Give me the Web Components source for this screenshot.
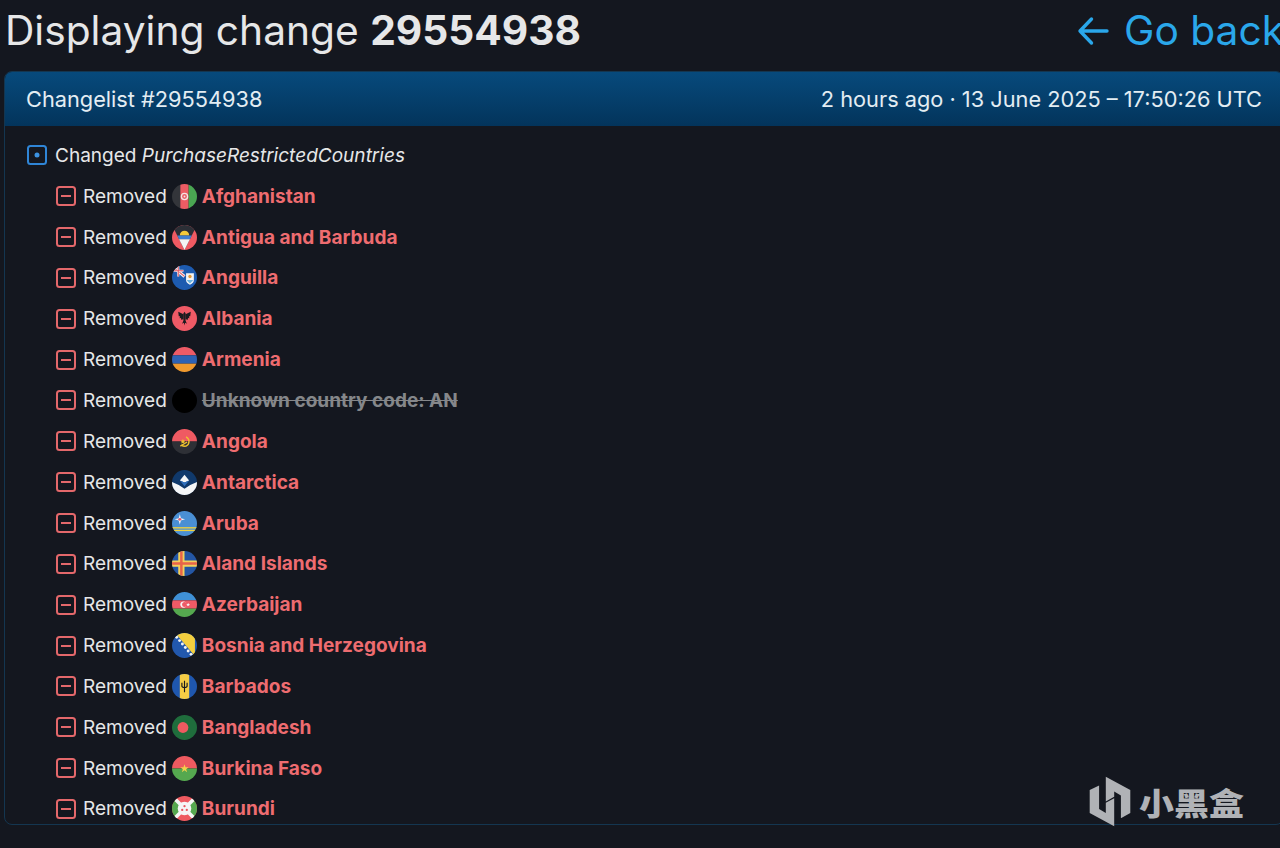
<!DOCTYPE html>
<html lang="en"><head><meta charset="utf-8"><title>Change 29554938</title>
<style>
html,body{margin:0;height:848px;overflow:hidden;background:#14171f}
body{font-family:Inter,"Noto Sans CJK SC",sans-serif}
</style></head><body>
<app-page>
  <page-title slot="title" number="29554938"></page-title>
  <change-card id="card" title-text="Changelist #29554938" time-text="2 hours ago · 13 June 2025 – 17:50:26 UTC">
    <change-row kind="changed"><span>Changed <i>PurchaseRestrictedCountries</i></span></change-row>
    <change-row kind="removed" flag="af">Afghanistan</change-row>
    <change-row kind="removed" flag="ag">Antigua and Barbuda</change-row>
    <change-row kind="removed" flag="ai">Anguilla</change-row>
    <change-row kind="removed" flag="al">Albania</change-row>
    <change-row kind="removed" flag="am">Armenia</change-row>
    <change-row kind="removed" flag="an" unknown>Unknown country code: AN</change-row>
    <change-row kind="removed" flag="ao">Angola</change-row>
    <change-row kind="removed" flag="aq">Antarctica</change-row>
    <change-row kind="removed" flag="aw">Aruba</change-row>
    <change-row kind="removed" flag="ax">Aland Islands</change-row>
    <change-row kind="removed" flag="az">Azerbaijan</change-row>
    <change-row kind="removed" flag="ba">Bosnia and Herzegovina</change-row>
    <change-row kind="removed" flag="bb">Barbados</change-row>
    <change-row kind="removed" flag="bd">Bangladesh</change-row>
    <change-row kind="removed" flag="bf">Burkina Faso</change-row>
    <change-row kind="removed" flag="bi">Burundi</change-row>
  </change-card>
  <water-mark></water-mark>
</app-page>
<script>
const FLAGS={
af:`<rect width="8.5" height="24" fill="#33353a"/><rect x="8" width="8" height="24" fill="#ec5c64"/><rect x="16" width="8" height="24" fill="#4aa652"/><circle cx="12" cy="12" r="3" fill="none" stroke="#f4e4e4" stroke-width="1.3"/><circle cx="12" cy="12" r=".9" fill="#f4e4e4"/>`,
ag:`<rect width="24" height="24" fill="#ef5a62"/><path d="M0 0H24L12 24Z" fill="#2c2f36"/><path d="M7.500 10a4.500 4.500 0 0 1 9 0Z" fill="#f3c93a"/><path d="M5 10H19L17.200 13.600H6.800Z" fill="#3f7fd0"/><path d="M6.800 13.600H17.200L12 24Z" fill="#f4f4f4"/>`,
ai:`<rect width="24" height="24" fill="#1d5bb0"/><path d="M0 1L12 11" stroke="#f3f3f3" stroke-width="3"/><path d="M0 1L12 11" stroke="#e45660" stroke-width="1"/><path d="M0 5.500H11M6 0V11" stroke="#f3f3f3" stroke-width="2"/><path d="M0 5.500H11M6 0V11" stroke="#e45660" stroke-width="1"/><path d="M13.500 8H21V14.500Q21 17.500 17.250 19Q13.500 17.500 13.500 14.500Z" fill="#f4f4f4"/><path d="M14.500 14.500H20V15L17.250 17.800L14.500 15Z" fill="#6fb5e0"/><circle cx="17.250" cy="11" r="1.600" fill="#e49a3a"/>`,
al:`<rect width="24" height="24" fill="#ef5a66"/><g fill="#1b1b1f"><path d="M11 8L6 5.500L6.500 9.800L7.700 9.800L7.300 11.700L8.700 11.500L8.700 13.200L11 12.700Z"/><path d="M13 8L18 5.500L17.500 9.800L16.300 9.800L16.700 11.700L15.300 11.500L15.300 13.200L13 12.700Z"/><path d="M12 5.500L13.200 7.500L13 14L14.300 17L12.600 16L12 18.800L11.400 16L9.700 17L11 14L10.800 7.500Z"/></g>`,
am:`<rect width="24" height="8" fill="#ee5b66"/><rect y="8" width="24" height="8" fill="#2e62b4"/><rect y="16" width="24" height="8" fill="#f09a2e"/>`,
an:`<rect width="24" height="24" fill="#000"/>`,
ao:`<rect width="24" height="12" fill="#ef5a62"/><rect y="12" width="24" height="12" fill="#2e3036"/><path d="M13.500 7.500A5 5 0 0 1 13.500 16.500A6 6 0 0 1 9 15.500" fill="none" stroke="#eec12f" stroke-width="1.300"/><path d="M8 16.500L14.500 12.500" stroke="#eec12f" stroke-width="1.300"/><path d="M10.500 9.500L11.300 11L13 11.200L11.700 12.300L12 14L10.500 13.200L9 14L9.300 12.300L8 11.200L9.700 11Z" fill="#eec12f"/>`,
aq:`<rect width="24" height="24" fill="#10396b"/><path d="M0 11.500L6.500 14.500L12 18L17.500 14.500L24 11.500V24H0Z" fill="#f5f6f7"/><path d="M12 4.500L16.500 10L12 12L7.500 10Z" fill="#f5f6f7"/><path d="M7.500 10L12 12L16.500 10L12 15.500Z" fill="#2f6fbd"/>`,
aw:`<rect width="24" height="24" fill="#4a8fd4"/><rect y="15.500" width="24" height="1.300" fill="#f2d23c"/><rect y="18" width="24" height="1.300" fill="#f2d23c"/><path d="M7.500 3L8.600 6.900L12.500 8L8.600 9.100L7.500 13L6.400 9.100L2.500 8L6.400 6.900Z" fill="#f3f3f6"/><circle cx="7.500" cy="8" r="1.400" fill="#d9566c"/>`,
ax:`<rect width="24" height="24" fill="#2456a4"/><path d="M9 0V24M0 12H24" stroke="#f2cf5a" stroke-width="6"/><path d="M9 0V24M0 12H24" stroke="#e8634a" stroke-width="2.400"/>`,
az:`<rect width="24" height="8" fill="#3f90d6"/><rect y="8" width="24" height="8" fill="#ee5a66"/><rect y="16" width="24" height="8" fill="#55a84f"/><circle cx="11" cy="12" r="3" fill="#f6f2f2"/><circle cx="12.100" cy="12" r="2.400" fill="#ee5a66"/><path d="M15.500 10.300l.5 1.200 1.300.1-1 .8.300 1.300-1.100-.7-1.100.7.300-1.300-1-.8 1.300-.1z" fill="#f6f2f2"/>`,
ba:`<rect width="24" height="24" fill="#2258ad"/><path d="M3 0H22V22Z" fill="#f4cf3f"/><g fill="#f4f4f4"><circle cx="4.500" cy="4" r="1.400"/><circle cx="7.300" cy="7.300" r="1.400"/><circle cx="10" cy="10.600" r="1.400"/><circle cx="12.800" cy="13.900" r="1.400"/><circle cx="15.500" cy="17.200" r="1.400"/><circle cx="18.300" cy="20.500" r="1.400"/></g>`,
bb:`<rect width="24" height="24" fill="#1f57ae"/><rect x="7.500" width="9" height="24" fill="#f6cd45"/><path d="M12 6.500V17.500M9.500 8.500V11.500Q9.500 13 12 13Q14.500 13 14.500 11.500V8.500" fill="none" stroke="#1a1a1e" stroke-width="1.100"/>`,
bd:`<rect width="24" height="24" fill="#1f6d3c"/><circle cx="10.500" cy="12" r="5.200" fill="#ee5a60"/>`,
bf:`<rect width="24" height="12" fill="#ee5a60"/><rect y="12" width="24" height="12" fill="#55a84f"/><path d="M12 8L13 10.800H16L13.600 12.600L14.500 15.500L12 13.700L9.500 15.500L10.400 12.600L8 10.800H11Z" fill="#f4d24a"/>`,
bi:`<rect width="24" height="24" fill="#ee5a60"/><path d="M0 0L12 12L0 24ZM24 0L12 12L24 24Z" fill="#55a84f"/><path d="M0 0L24 24M24 0L0 24" stroke="#f5f5f5" stroke-width="3.400"/><circle cx="12" cy="12" r="6.500" fill="#f5f5f5"/><g fill="#e8555c"><circle cx="12" cy="9.800" r="1.100"/><circle cx="9.800" cy="13.400" r="1.100"/><circle cx="14.200" cy="13.400" r="1.100"/></g>`
};
function define(name,html){
  customElements.define(name,class extends HTMLElement{
    constructor(){super();this.attachShadow({mode:'open'})}
    connectedCallback(){this.shadowRoot.innerHTML=typeof html==='function'?html(this):html}
  });
}
define('app-page',`<style>
:host{display:block;width:1280px;height:848px;overflow:hidden;position:relative;color:#e8e9ea;
 font-family:Inter,"Noto Sans CJK SC",sans-serif}
.w{width:1280px;padding:0 0 0 4px;box-sizing:border-box}
</style><div class="w"><slot name="title"></slot><slot></slot></div>`);
define('page-title',h=>`<style>
:host{display:flex;justify-content:space-between;align-items:center;width:1280px;height:71px;padding-bottom:10px;box-sizing:border-box}
h1{margin:0 0 0 1px;font-size:40.700px;font-weight:400;color:#e6e7e8;line-height:60px;white-space:nowrap}
b{font-weight:700}
a{display:flex;align-items:center;gap:15px;color:#2aa7ea;font-size:40.700px;line-height:60px;text-decoration:none;white-space:nowrap}
svg{display:block}
</style><h1>Displaying change <b>${h.getAttribute('number')}</b></h1>
<a href="#"><svg width="32" height="30" viewBox="0 0 32 30" fill="none" stroke="#2aa7ea" stroke-width="3.400" stroke-linecap="round" stroke-linejoin="round"><path d="M3 15H30M14.500 3L3 15L14.500 27"/></svg><span>Go back</span></a>`);
define('change-card',h=>`<style>
:host{display:block;width:1280px;border:1px solid #143650;border-radius:8px;box-sizing:border-box;overflow:hidden;background:#14171f}
header{display:flex;justify-content:space-between;align-items:center;height:54px;padding:0 21px;
 background:linear-gradient(#074a7c,#03345b);color:#e3edf3;font-size:21.750px;font-weight:400;white-space:nowrap}
main{display:flex;flex-direction:column;gap:16px;padding:17px 0 3px 22px}
</style><header><span>${h.getAttribute('title-text')}</span><span>${h.getAttribute('time-text')}</span></header><main><slot></slot></main>`);
define('diff-icon',h=>`<style>:host{display:block;width:20px;height:20px}svg{display:block}</style>`+
 (h.getAttribute('kind')==='changed'
 ?`<svg width="20" height="20" viewBox="0 0 20 20" fill="none"><rect x="1" y="1" width="18" height="18" rx="2.500" stroke="#2f85d6" stroke-width="2"/><circle cx="10" cy="10" r="2.500" fill="#3c93e2"/></svg>`
 :`<svg width="20" height="20" viewBox="0 0 20 20" fill="none"><rect x="1" y="1" width="18" height="18" rx="2.500" stroke="#e4686b" stroke-width="2"/><path d="M5 10H15" stroke="#e4686b" stroke-width="2"/></svg>`));
define('flag-icon',h=>`<style>:host{display:block;width:25px;height:25px;border-radius:50%;overflow:hidden}svg{display:block}</style>
<svg width="25" height="25" viewBox="0 0 24 24">${FLAGS[h.getAttribute('code')]||''}</svg>`);
define('change-row',h=>{
 const changed=h.getAttribute('kind')==='changed';
 const s=`<style>
 :host{display:flex;align-items:center;height:24.850px;gap:8px;font-size:19.050px;color:#e6e7e8;white-space:nowrap;${changed?'':'margin-left:29px;'}}
 .l{margin:0 -3px 0 -1px}
 .n{font-weight:700;color:#ee6c70;margin-left:-3px}
 .u{color:#85878a;text-decoration:line-through}
 </style>`;
 if(changed) return s+`<diff-icon kind="changed"></diff-icon><slot></slot>`;
 return s+`<diff-icon kind="removed"></diff-icon><span class="l">Removed</span><flag-icon code="${h.getAttribute('flag')}"></flag-icon><span class="n ${h.hasAttribute('unknown')?'u':''}"><slot></slot></span>`;
});
define('water-mark',`<style>
:host{position:absolute;left:1089px;top:776px;display:flex;align-items:center;gap:8px;color:#b0b2b6}
svg{display:block}
span{font:900 35px/1 "Noto Sans CJK SC",sans-serif;margin-top:-2px;transform:scaleY(.88);transform-origin:50% 60%}
</style><svg width="42" height="51" viewBox="55 50 125 152" fill="#b0b2b6"><path d="M57 92L85 78V148L105 160V130L130 116V200L57 160Z"/><path d="M105 52L178 92V160L150 176V108L130 96V112L105 126Z"/></svg><span>小黑盒</span>`);
</script>
</body></html>
